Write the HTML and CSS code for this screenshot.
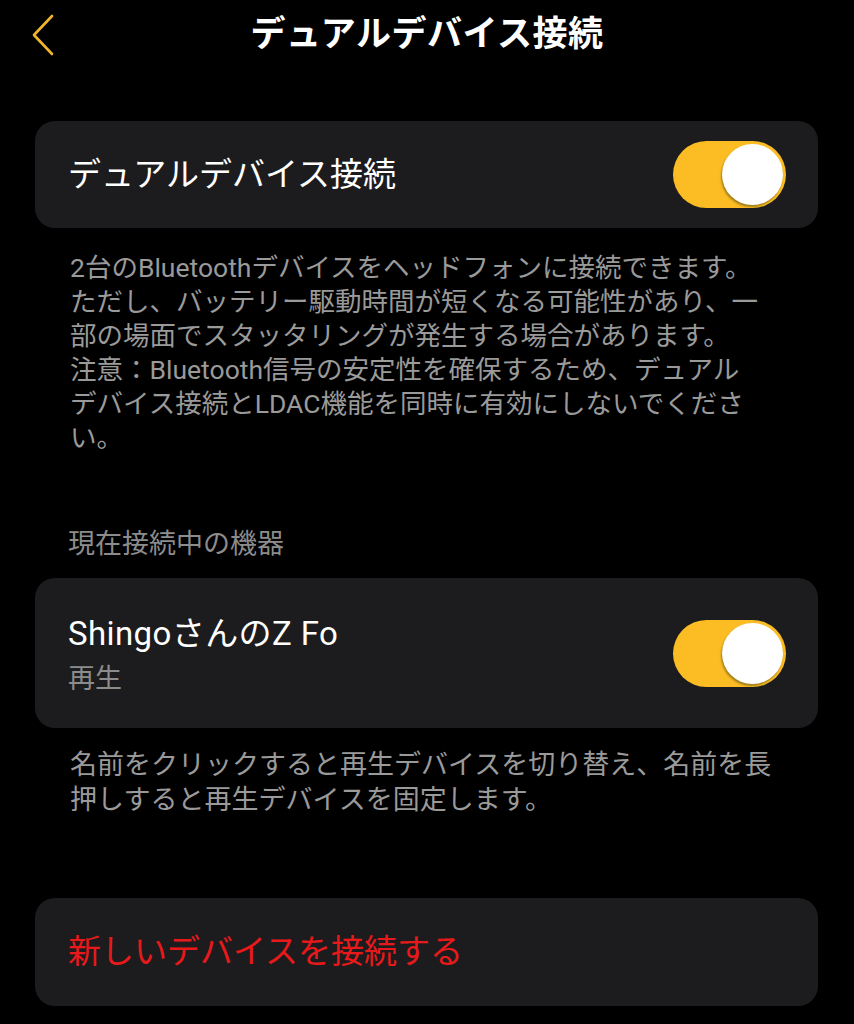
FILE: index.html
```html
<!DOCTYPE html>
<html lang="ja">
<head>
  <meta charset="UTF-8">
  <meta name="viewport" content="width=device-width, initial-scale=1.0">
  <title>デュアルデバイス接続</title>
  <link rel="stylesheet" href="styles.css">
</head>
<body>
  <div class="header">
    <div class="back">
      <svg width="24" height="42" viewBox="0 0 24 42">
        <polyline points="21,2 3,21 21,40" fill="none" stroke="#f2b42c" stroke-width="2.6" stroke-linecap="round" stroke-linejoin="round"/>
      </svg>
    </div>
    <h1 class="title">デュアルデバイス接続</h1>
    <div></div>
  </div>

  <div class="card row">
    <span class="row-label">デュアルデバイス接続</span>
    <div class="toggle on"><div class="knob"></div></div>
  </div>

  <p class="note">
    2台のBluetoothデバイスをヘッドフォンに接続できます。<br>
    ただし、バッテリー駆動時間が短くなる可能性があり、一<br>
    部の場面でスタッタリングが発生する場合があります。<br>
    注意：Bluetooth信号の安定性を確保するため、デュアル<br>
    デバイス接続とLDAC機能を同時に有効にしないでくださ<br>
    い。
  </p>

  <div class="section-label">現在接続中の機器</div>

  <div class="card row device">
    <div class="device-text">
      <span class="row-label device-name">ShingoさんのZ Fo</span>
      <span class="device-status">再生</span>
    </div>
    <div class="toggle on"><div class="knob"></div></div>
  </div>

  <p class="note note-short">
    名前をクリックすると再生デバイスを切り替え、名前を長<br>
    押しすると再生デバイスを固定します。
  </p>

  <div class="card row action">
    <span class="action-label">新しいデバイスを接続する</span>
  </div>
</body>
</html>
```

FILE: styles.css
```css
body {
  margin: 0;
  padding: 0 36px 0 35px;
  background-color: #000;
  color: #fff;
  font-family: Roboto, "Noto Sans CJK JP", sans-serif;
  height: 1024px;
  overflow: hidden;
}

.header {
  display: grid;
  grid-template-columns: 1fr auto 1fr;
  align-items: center;
  height: 70px;
  margin: 0 -36px 51px -35px;
}

.back {
  padding-left: 31px;
  display: flex;
  align-items: center;
  height: 70px;
}

.title {
  margin: 0;
  font-size: 35px;
  font-weight: 700;
  line-height: 70px;
  letter-spacing: 0.5px;
}

.card {
  background-color: #1c1c1e;
  border-radius: 20px;
}

.row {
  display: flex;
  align-items: center;
  justify-content: space-between;
  height: 107px;
  padding: 0 32px 0 33px;
}

.row-label {
  font-size: 33px;
  line-height: 40px;
}

.toggle {
  width: 113px;
  height: 67px;
  border-radius: 34px;
  background-color: #3a3a3c;
  display: flex;
  align-items: center;
  padding: 0 3px;
  box-sizing: border-box;
}

.toggle.on {
  background-color: #fbbd23;
  justify-content: flex-end;
}

.knob {
  width: 61px;
  height: 61px;
  border-radius: 50%;
  background-color: #fff;
  box-shadow: -1px 2px 2px rgba(60, 50, 20, 0.45);
}

.note {
  margin: 23px 0 0 0;
  padding-left: 35px;
  color: #9a9a9a;
  font-size: 26.5px;
  line-height: 34px;
  white-space: nowrap;
}

.section-label {
  margin-top: 72px;
  padding-left: 33px;
  color: #8c8c8c;
  font-size: 27px;
  line-height: 34px;
  margin-bottom: 17px;
}

.device {
  height: 150px;
}

.device-text {
  display: flex;
  flex-direction: column;
  gap: 8px;
  margin-top: 4px;
}

.device-name {
  font-size: 33px;
  letter-spacing: 0.4px;
}

.device-status {
  color: #8c8c8c;
  font-size: 27px;
  line-height: 34px;
}

.note-short {
  margin-top: 20px;
  font-size: 27px;
  line-height: 35px;
}

.action {
  margin-top: 80px;
  height: 108px;
}

.action-label {
  color: #e8191a;
  font-size: 33px;
  line-height: 40px;
}
```
